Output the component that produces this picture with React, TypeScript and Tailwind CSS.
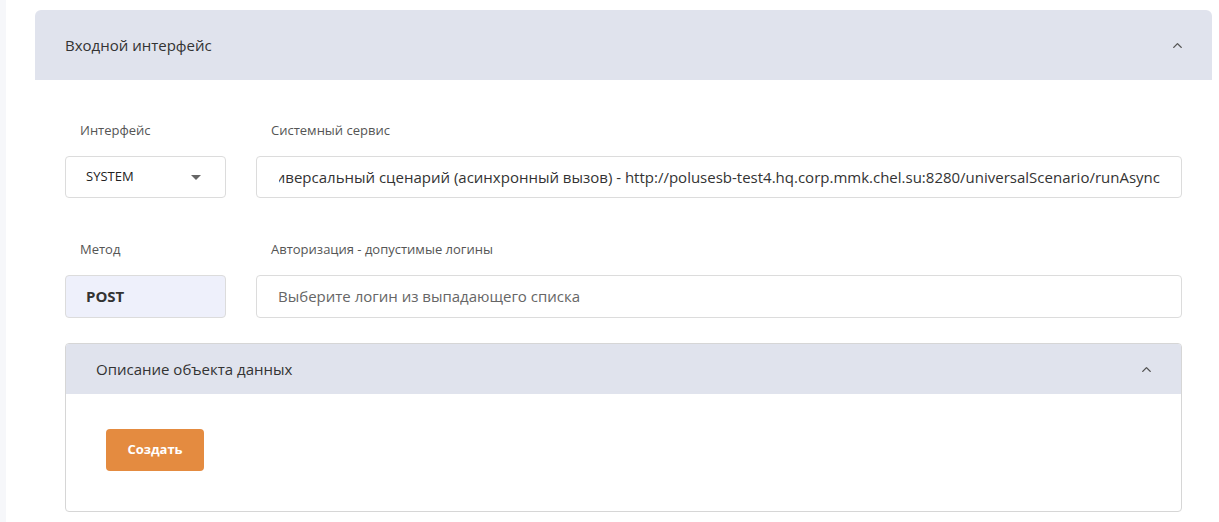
import { ChevronUp } from 'lucide-react';

const serviceText =
  'Универсальный сценарий (асинхронный вызов) - http://polusesb-test4.hq.corp.mmk.chel.su:8280/universalScenario/runAsync';

function Label({ children }: { children: React.ReactNode }) {
  return <div className="text-[13px] text-[#555] h-[26px] leading-[26px] pl-[15px]">{children}</div>;
}

export default function App() {
  return (
    <div className="flex h-[522px] bg-white font-['Open_Sans',sans-serif] overflow-hidden">
      <div className="w-[6px] bg-[#f6f7fa] shrink-0" />
      <div className="flex-1 min-w-0 pl-[29px] pr-[7px] pt-[10px]">
        <div className="bg-white rounded-t-[6px]">
          <div className="h-[70px] bg-[#e0e3ed] rounded-t-[6px] flex items-center justify-between pl-[30px] pr-[27px]">
            <span className="text-[15px] text-[#333]">Входной интерфейс</span>
            <ChevronUp size={15} strokeWidth={2.25} className="text-[#555]" />
          </div>

          <div className="pl-[30px] pr-[30px] pt-[37px]">
            <div className="grid grid-cols-[161px_minmax(0,1fr)] gap-x-[30px]">
              <div>
                <Label>Интерфейс</Label>
                <div className="mt-[13px] h-[42px] border border-[#dcdcdc] rounded-[4px] flex items-center justify-between pl-[20px] pr-[24px]">
                  <span className="text-[13px] text-[#222]">SYSTEM</span>
                  <span className="w-0 h-0 border-l-[5px] border-r-[5px] border-t-[5px] border-l-transparent border-r-transparent border-t-[#666]" />
                </div>
              </div>
              <div className="min-w-0">
                <Label>Системный сервис</Label>
                <div className="mt-[13px] h-[42px] border border-[#dcdcdc] rounded-[4px] flex items-center pl-[22px] pr-[21px]">
                  <div className="flex-1 min-w-0 overflow-hidden flex justify-end">
                    <span className="whitespace-nowrap text-[15px] text-[#333]">{serviceText}</span>
                  </div>
                </div>
              </div>
            </div>

            <div className="grid grid-cols-[161px_minmax(0,1fr)] gap-x-[30px] mt-[38px]">
              <div>
                <Label>Метод</Label>
                <div className="mt-[13px] h-[43px] border border-[#dcdcdc] rounded-[4px] bg-[#eef0fb] flex items-center pl-[20px]">
                  <span className="text-[15px] font-bold text-[#333]">POST</span>
                </div>
              </div>
              <div className="min-w-0">
                <Label>Авторизация - допустимые логины</Label>
                <div className="mt-[13px] h-[43px] border border-[#dcdcdc] rounded-[4px] flex items-center px-[21px]">
                  <span className="text-[15px] text-[#666]">Выберите логин из выпадающего списка</span>
                </div>
              </div>
            </div>

            <div className="mt-[25px] border border-[#d6d6d6] rounded-[4px] overflow-hidden">
              <div className="h-[50px] bg-[#e0e3ed] flex items-center justify-between pl-[30px] pr-[27px]">
                <span className="text-[15px] text-[#333]">Описание объекта данных</span>
                <ChevronUp size={15} strokeWidth={2.25} className="text-[#555]" />
              </div>
              <div className="pl-[40px] pt-[35px] pb-[40px]">
                <button className="w-[98px] h-[42px] rounded-[4px] bg-[#e48b40] text-white text-[13px] font-bold">
                  Создать
                </button>
              </div>
            </div>
          </div>
        </div>
      </div>
    </div>
  );
}
